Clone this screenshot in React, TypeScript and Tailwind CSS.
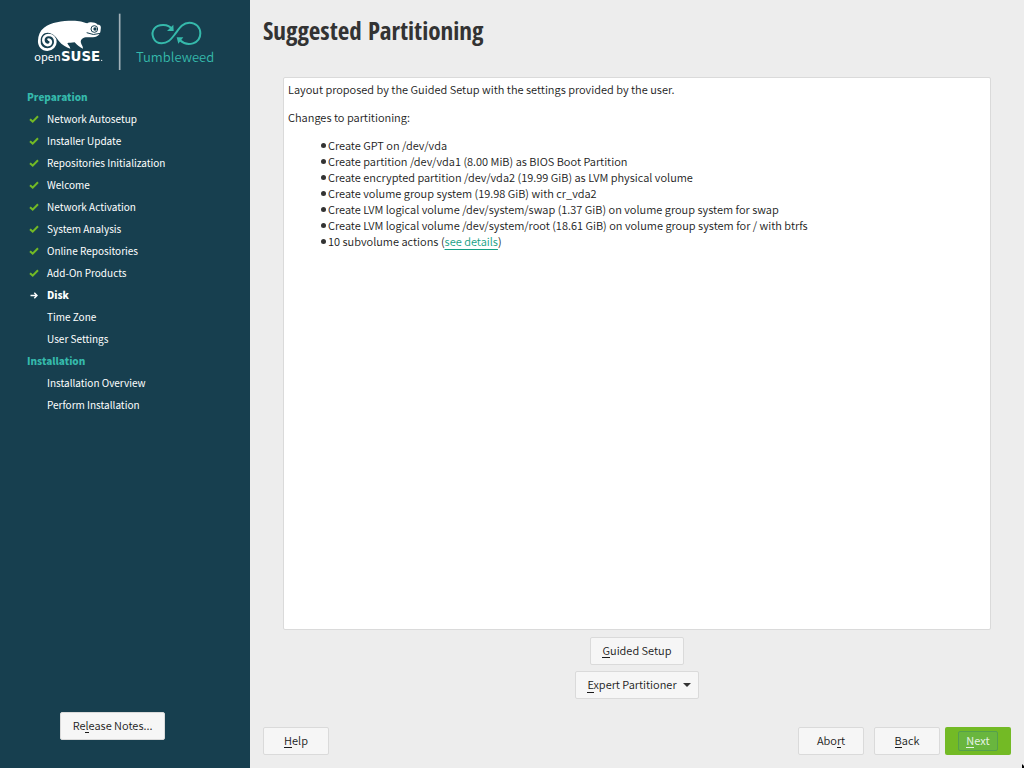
import type { ReactNode } from "react";

type StepState = "done" | "current" | "pending";

interface Step {
  label: string;
  state: StepState;
}

interface Stage {
  title: string;
  steps: Step[];
}

const stages: Stage[] = [
  {
    title: "Preparation",
    steps: [
      { label: "Network Autosetup", state: "done" },
      { label: "Installer Update", state: "done" },
      { label: "Repositories Initialization", state: "done" },
      { label: "Welcome", state: "done" },
      { label: "Network Activation", state: "done" },
      { label: "System Analysis", state: "done" },
      { label: "Online Repositories", state: "done" },
      { label: "Add-On Products", state: "done" },
      { label: "Disk", state: "current" },
      { label: "Time Zone", state: "pending" },
      { label: "User Settings", state: "pending" },
    ],
  },
  {
    title: "Installation",
    steps: [
      { label: "Installation Overview", state: "pending" },
      { label: "Perform Installation", state: "pending" },
    ],
  },
];

const changes = [
  "Create GPT on /dev/vda",
  "Create partition /dev/vda1 (8.00 MiB) as BIOS Boot Partition",
  "Create encrypted partition /dev/vda2 (19.99 GiB) as LVM physical volume",
  "Create volume group system (19.98 GiB) with cr_vda2",
  "Create LVM logical volume /dev/system/swap (1.37 GiB) on volume group system for swap",
  "Create LVM logical volume /dev/system/root (18.61 GiB) on volume group system for / with btrfs",
];

function Logo() {
  return (
    <svg viewBox="0 0 600 180" className="h-[60px] w-[200px]" role="img" aria-label="openSUSE Tumbleweed">
      <path
        fill="#fff"
        d="M202 40 C208 35 226 36 233 44 C242 43 244 50 242 58 C242 68 238 78 225 81 C212 83 199 80 190 84 C183 88 181 93 183 99 C185 106 189 109 189 116 C180 113 171 105 164 97 C155 99 147 97 142 99 C144 105 150 109 151 116 C139 113 125 104 117 94 C110 82 99 69 83 68 C70 68 62 78 62 92 L54 92 C54 76 60 62 72 53 C94 36 126 32 158 32 C178 32 190 36 202 40 Z"
      />
      <path
        d="M58 90 C56 108 68 119 82 119 C97 119 106 107 106 96 C106 83 97 75 86 75 C76 75 69 83 70 92 C71 101 78 106 85 105 C91 104 94 98 92 93 C90 89 86 88 83 90"
        fill="none"
        stroke="#fff"
        strokeWidth="8"
      />
      <circle cx="223" cy="57" r="10" fill="#fff" stroke="#173f4f" strokeWidth="3" />
      <circle cx="225" cy="57" r="5" fill="#173f4f" />
      <path d="M200 68 Q220 78 241 70" fill="none" stroke="#173f4f" strokeWidth="3" />
      <text x="43" y="152" fill="#fff" className="font-['Noto_Sans_CJK_SC',sans-serif] text-[33px]">open</text>
      <text x="123" y="152" fill="#fff" className="font-['DejaVu_Sans',sans-serif] text-[40px] font-bold">SUSE</text>
      <circle cx="245" cy="151" r="2" fill="#fff" />
      <path d="M299 11 V180" stroke="#a2b2b9" strokeWidth="5" />
      <path
        d="M455 57 C446 42 415 41 403 56 C391 71 400 100 425 100 C443 100 451 90 463 75 C477 57 486 38 508 38 C529 38 541 53 541 70 C541 101 503 112 480 91"
        fill="none"
        stroke="#35b9ab"
        strokeWidth="6"
      />
      <path d="M460 44 L461 63 L441 63 Z M470 82 L490 82 L475 101 Z" fill="#35b9ab" />
      <text x="348" y="155" fill="#35b9ab" className="font-['Noto_Sans_CJK_SC',sans-serif] text-[39px] font-[350]">Tumbleweed</text>
    </svg>
  );
}

function StepIcon({ state }: { state: StepState }) {
  if (state === "done") {
    return (
      <svg viewBox="0 0 10 10" className="size-[10px]" aria-hidden="true">
        <path d="M1 5.2 L3.7 7.6 L9 2.2" fill="none" stroke="#73ba25" strokeWidth="2" />
      </svg>
    );
  }
  if (state === "current") {
    return (
      <svg viewBox="0 0 10 10" className="size-[10px]" aria-hidden="true">
        <path d="M1.5 5.5 H8 M5.3 2.7 L8 5.5 L5.3 8.3" fill="none" stroke="#fff" strokeWidth="1.4" />
      </svg>
    );
  }
  return null;
}

function Key({ children }: { children: ReactNode }) {
  return <span className="border-b border-current">{children}</span>;
}

function PushButton({ children, className = "" }: { children: ReactNode; className?: string }) {
  return (
    <button
      type="button"
      className={`flex h-7 items-center justify-center rounded-xs border border-[#dadada] bg-[#f6f6f6] pb-[2px] text-[11px] leading-[14px] font-[350] text-[#1a1a1a] ${className}`}
    >
      {children}
    </button>
  );
}

export default function App() {
  return (
    <div className="flex min-h-screen bg-[#ededed] font-['Noto_Sans_CJK_SC',sans-serif] text-[11px] text-[#2b2b2b]">
      <aside className="flex w-[250px] shrink-0 flex-col bg-[#173f4f] pb-7 text-white">
        <div className="pt-[10px] pl-5">
          <Logo />
        </div>
        <nav className="mt-4 text-[10px] leading-[22px]">
          {stages.map((stage) => (
            <section key={stage.title}>
              <h2 className="pl-[27px] font-black text-[#35b9ab]">{stage.title}</h2>
              <ul>
                {stage.steps.map((step) => (
                  <li key={step.label} className="flex h-[22px] items-center pl-[29px]">
                    <span className="w-[18px]">
                      <StepIcon state={step.state} />
                    </span>
                    <span className={step.state === "current" ? "font-black" : ""}>{step.label}</span>
                  </li>
                ))}
              </ul>
            </section>
          ))}
        </nav>
        <div className="mt-auto flex justify-center pr-[25px]">
          <PushButton className="w-[105px]">
            Re<Key>l</Key>ease Notes...
          </PushButton>
        </div>
      </aside>

      <main className="flex min-w-0 flex-1 flex-col px-[13px] pb-[13px]">
        <h1 className="pt-3 font-['Open_Sans_Condensed','Liberation_Sans_Narrow',sans-serif] text-[25px] leading-9 font-bold text-[#333]">
          Suggested Partitioning
        </h1>
        <section className="mx-5 mt-[29px] flex-1 rounded-xs border border-[#dadada] bg-white px-1 pt-[3px] leading-4 font-[350] text-[#1a1a1a]">
          <p>Layout proposed by the Guided Setup with the settings provided by the user.</p>
          <p className="mt-3">Changes to partitioning:</p>
          <ul className="mt-3 pl-8">
            {changes.map((change) => (
              <li key={change} className="flex items-center gap-[2px]">
                <span className="ml-px size-[5px] rounded-full bg-[#333]" />
                {change}
              </li>
            ))}
            <li className="flex items-center gap-[2px]">
              <span className="ml-px size-[5px] rounded-full bg-[#333]" />
              <span>
                10 subvolume actions (
                <a href="#details" className="text-[#16a085] underline underline-offset-3">
                  see details
                </a>
                )
              </span>
            </li>
          </ul>
        </section>
        <div className="mt-[7px] flex flex-col items-center gap-[6px]">
          <PushButton className="w-[94px]">
            <Key>G</Key>uided Setup
          </PushButton>
          <PushButton className="w-[124px] gap-[6px] pl-1">
            <span>
              <Key>E</Key>xpert Partitioner
            </span>
            <svg viewBox="0 0 8 4" className="mt-[2px] h-1 w-2" aria-hidden="true">
              <path d="M0 0 H8 L4 4 Z" fill="#333" />
            </svg>
          </PushButton>
        </div>
        <footer className="mt-7 flex">
          <PushButton className="w-[66px]">
            <Key>H</Key>elp
          </PushButton>
          <PushButton className="mr-[10px] ml-auto w-[66px]">
            Abo<Key>r</Key>t
          </PushButton>
          <PushButton className="mr-[5px] w-[66px]">
            <Key>B</Key>ack
          </PushButton>
          <button
            type="button"
            className="flex h-7 w-[66px] items-center justify-center rounded-xs bg-[#73ba25] leading-[14px] text-[#e6f3e4]"
          >
            <span className="flex h-5 w-10 items-center justify-center rounded-xs border border-[#55a04c] bg-[#69b63e] pb-[2px]">
              <Key>N</Key>ext
            </span>
          </button>
        </footer>
      </main>
      <svg viewBox="0 0 2 4" className="pointer-events-none fixed right-0 bottom-0 h-1 w-[2px]" aria-hidden="true">
        <path d="M0 0 L2 2 V4 H0 Z" fill="#000" />
      </svg>
    </div>
  );
}
